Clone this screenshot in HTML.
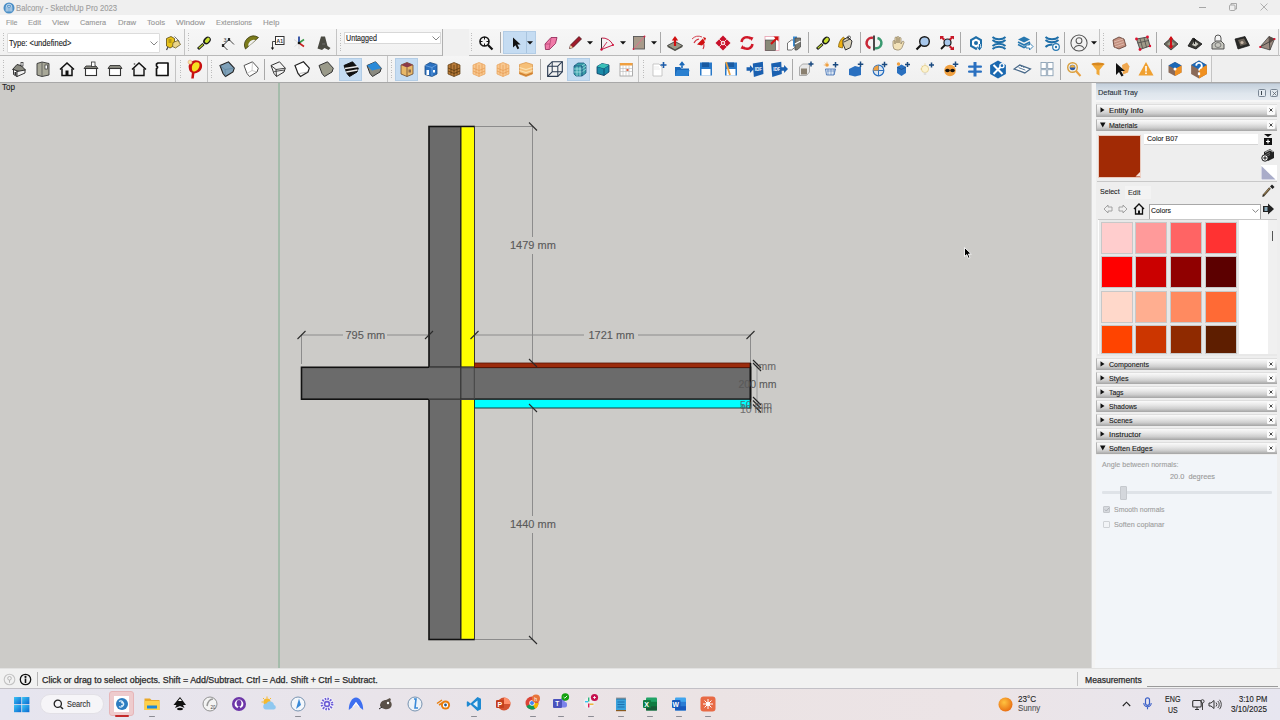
<!DOCTYPE html>
<html><head><meta charset="utf-8"><style>
*{box-sizing:border-box;}
html,body{margin:0;padding:0;}
body{width:1280px;height:720px;position:relative;overflow:hidden;font-family:"Liberation Sans",sans-serif;background:#f0f0f0;}
div{position:absolute;}
.s2{-webkit-text-stroke:0.25px currentColor !important;}
.t{white-space:nowrap;transform-origin:0 0;-webkit-text-stroke:0.12px currentColor;}
svg{position:absolute;overflow:visible;}
</style></head><body>
<div style="left:0;top:0;width:1280px;height:15px;background:#efefef;"></div>
<div style="left:0;top:15px;width:1280px;height:14px;background:#fbfbfb;"></div>
<div class="t" style="left:16px;top:3.5px;font-size:9px;line-height:9px;color:#9d9d9d;transform:scaleX(0.856);">Balcony - SketchUp Pro 2023</div>
<svg style="left:2.5px;top:1.5px" width="12" height="12" viewBox="0 0 12 12"><circle cx="6" cy="6" r="5.5" fill="#4a8ec6"/><path d="M3.2 9.5V5a2.8 2.8 0 0 1 5.6 0v4.5" stroke="#e4eef7" stroke-width="0.8" fill="none"/><path d="M4.8 9.5V5.3a1.2 1.2 0 0 1 2.4 0v4.2" stroke="#e4eef7" stroke-width="0.8" fill="none"/><path d="M6 9.5V6" stroke="#e4eef7" stroke-width="0.6"/></svg>
<div style="left:1199px;top:6.5px;width:7px;height:1px;background:#a6a6a6;"></div>
<svg style="left:1228.5px;top:3px" width="8" height="8" viewBox="0 0 8 8"><rect x="0.5" y="2" width="5.5" height="5.5" fill="none" stroke="#a0a0a0" stroke-width="0.9" rx="1"/><path d="M2 2V0.5h5.5V6H6" fill="none" stroke="#a0a0a0" stroke-width="0.9"/></svg>
<svg style="left:1259.5px;top:3px" width="8" height="8" viewBox="0 0 8 8"><path d="M0.5 0.5L7.5 7.5M7.5 0.5L0.5 7.5" stroke="#a0a0a0" stroke-width="0.8"/></svg>
<div class="t" style="left:5.5px;top:18.5px;font-size:8px;line-height:8px;color:#979797;transform:scaleX(0.892);">File</div>
<div class="t" style="left:28px;top:18.5px;font-size:8px;line-height:8px;color:#979797;transform:scaleX(0.943);">Edit</div>
<div class="t" style="left:52px;top:18.5px;font-size:8px;line-height:8px;color:#979797;transform:scaleX(0.989);">View</div>
<div class="t" style="left:80px;top:18.5px;font-size:8px;line-height:8px;color:#979797;transform:scaleX(0.914);">Camera</div>
<div class="t" style="left:118px;top:18.5px;font-size:8px;line-height:8px;color:#979797;transform:scaleX(0.964);">Draw</div>
<div class="t" style="left:147px;top:18.5px;font-size:8px;line-height:8px;color:#979797;transform:scaleX(0.964);">Tools</div>
<div class="t" style="left:175.6px;top:18.5px;font-size:8px;line-height:8px;color:#979797;transform:scaleX(1.019);">Window</div>
<div class="t" style="left:216px;top:18.5px;font-size:8px;line-height:8px;color:#979797;transform:scaleX(0.92);">Extensions</div>
<div class="t" style="left:262.7px;top:18.5px;font-size:8px;line-height:8px;color:#979797;transform:scaleX(0.991);">Help</div>
<div style="left:0;top:29px;width:1280px;height:53px;background:#eeeeee;"></div>
<div style="left:0;top:82px;width:1091px;height:586px;background:#cccbc8;"></div>
<div style="left:0;top:82px;width:1091px;height:1px;background:#9c9c9c;"></div>
<div style="left:1091px;top:82px;width:189px;height:586px;background:#f0f0f0;"></div>
<svg style="left:0;top:0" width="1091" height="668" viewBox="0 0 1091 668"><rect x="278" y="83" width="2" height="585" fill="#bcd6c4" opacity="0.35"/><line x1="279" y1="83" x2="279" y2="668" stroke="#82a890" stroke-width="1"/><line x1="301" y1="335" x2="343" y2="335" stroke="#8c8c8c" stroke-width="1"/><line x1="387" y1="335" x2="429" y2="335" stroke="#8c8c8c" stroke-width="1"/><line x1="301.5" y1="335" x2="301.5" y2="364" stroke="#8c8c8c" stroke-width="1"/><line x1="474" y1="335" x2="584" y2="335" stroke="#8c8c8c" stroke-width="1"/><line x1="638" y1="335" x2="750" y2="335" stroke="#8c8c8c" stroke-width="1"/><line x1="750.5" y1="335" x2="750.5" y2="363" stroke="#8c8c8c" stroke-width="1"/><line x1="475" y1="126.5" x2="533" y2="126.5" stroke="#8c8c8c" stroke-width="1"/><line x1="532.5" y1="126" x2="532.5" y2="237" stroke="#8c8c8c" stroke-width="1"/><line x1="532.5" y1="254" x2="532.5" y2="363" stroke="#8c8c8c" stroke-width="1"/><line x1="475" y1="639.5" x2="533" y2="639.5" stroke="#8c8c8c" stroke-width="1"/><line x1="532.5" y1="408" x2="532.5" y2="516" stroke="#8c8c8c" stroke-width="1"/><line x1="532.5" y1="533" x2="532.5" y2="640" stroke="#8c8c8c" stroke-width="1"/><line x1="757" y1="363" x2="757" y2="409" stroke="#9a9a9a" stroke-width="1"/><rect x="429" y="126.5" width="45" height="513" fill="#6b6b6b" stroke="#111" stroke-width="1.6"/><rect x="461" y="127.3" width="13" height="240" fill="#ffff00"/><rect x="461" y="399.5" width="13" height="239.2" fill="#ffff00"/><line x1="460.8" y1="127" x2="460.8" y2="639" stroke="#222" stroke-width="1.4"/><rect x="301.5" y="367.3" width="449" height="31.9" fill="#6b6b6b" stroke="#111" stroke-width="1.6"/><line x1="429" y1="367.3" x2="474" y2="367.3" stroke="#555" stroke-width="1"/><line x1="429" y1="399.2" x2="474" y2="399.2" stroke="#555" stroke-width="1"/><line x1="460.8" y1="367" x2="460.8" y2="399.5" stroke="#333" stroke-width="1.2"/><line x1="474.3" y1="367" x2="474.3" y2="399.5" stroke="#444" stroke-width="1"/><rect x="429" y="368.2" width="0" height="30" /><rect x="428" y="368.1" width="32" height="30.3" fill="#6b6b6b"/><rect x="474.5" y="363" width="276" height="4.5" fill="#9b2b0c" stroke="#5a1505" stroke-width="0.8"/><rect x="474.5" y="399.5" width="276" height="8.5" fill="#00ffff" stroke="#1a3a3a" stroke-width="1"/><line x1="750.5" y1="363" x2="750.5" y2="408.5" stroke="#111" stroke-width="1.6"/><line x1="297.5" y1="339" x2="305.5" y2="331" stroke="#2a2a2a" stroke-width="1.1"/><line x1="425" y1="339" x2="433" y2="331" stroke="#2a2a2a" stroke-width="1.1"/><line x1="470.5" y1="339" x2="478.5" y2="331" stroke="#2a2a2a" stroke-width="1.1"/><line x1="746.5" y1="339" x2="754.5" y2="331" stroke="#2a2a2a" stroke-width="1.1"/><line x1="529" y1="122.5" x2="537" y2="130.5" stroke="#2a2a2a" stroke-width="1.1"/><line x1="529" y1="359" x2="537" y2="367" stroke="#2a2a2a" stroke-width="1.1"/><line x1="529" y1="404" x2="537" y2="412" stroke="#2a2a2a" stroke-width="1.1"/><line x1="529" y1="636" x2="537" y2="644" stroke="#2a2a2a" stroke-width="1.1"/><line x1="753" y1="360" x2="761" y2="368" stroke="#222" stroke-width="1.1"/><line x1="753" y1="363" x2="761" y2="371" stroke="#222" stroke-width="1.1"/><line x1="753" y1="397" x2="761" y2="405" stroke="#222" stroke-width="1.1"/><line x1="753" y1="400.5" x2="761" y2="408.5" stroke="#222" stroke-width="1.1"/><line x1="753" y1="404.5" x2="761" y2="412.5" stroke="#222" stroke-width="1.1"/></svg>
<div class="t" style="left:345.5px;top:330px;font-size:11px;line-height:11px;color:#5a5a5a;">795 mm</div>
<div class="t" style="left:588.5px;top:330px;font-size:11px;line-height:11px;color:#5a5a5a;">1721 mm</div>
<div class="t" style="left:510px;top:239.5px;font-size:11px;line-height:11px;color:#5a5a5a;">1479 mm</div>
<div class="t" style="left:510px;top:519px;font-size:11px;line-height:11px;color:#5a5a5a;">1440 mm</div>
<div class="t" style="left:738.5px;top:378.5px;font-size:10.5px;line-height:10.5px;color:#5a5a5a;">200 mm</div>
<div class="t" style="left:758.5px;top:361px;font-size:10.5px;line-height:10.5px;color:#5a5a5a;opacity:0.85;">mm</div>
<div class="t" style="left:740px;top:399.5px;font-size:10.5px;line-height:10.5px;color:#5a5a5a;opacity:0.8;">50 mm</div>
<div class="t" style="left:740px;top:403.5px;font-size:10.5px;line-height:10.5px;color:#5a5a5a;opacity:0.8;">10 mm</div>
<div class="t" style="left:2px;top:83.5px;font-size:8.2px;line-height:8.2px;color:#222;transform:scaleX(0.983);">Top</div>
<svg style="left:962.5px;top:245.5px" width="10" height="14" viewBox="0 0 10 14"><path d="M1.5 1.5V10.5L3.8 8.6L5.3 12.3L6.9 11.6L5.5 8H8.3Z" fill="#000" stroke="#fff" stroke-width="0.9" stroke-linejoin="round"/></svg><div style="left:1091px;top:82px;width:5px;height:586px;background:#f4f4f4;border-left:1px solid #dadada;"></div>
<div style="left:1096px;top:82px;width:184px;height:586px;background:#eeeeee;"></div>
<div style="left:1096px;top:82.5px;width:184px;height:17.5px;background:linear-gradient(#c4d0dc,#dfe6ed 60%,#e6ebf1);border-top:1px solid #b4bcc6;"></div>
<div class="t" style="left:1098.2px;top:88.8px;font-size:8px;line-height:8px;color:#28323c;transform:scaleX(0.923);">Default Tray</div>

<div style="left:1258px;top:89px;width:7.5px;height:7.5px;border:1px solid #7a8694;border-radius:1.5px;background:#e3e9ef;"></div>
<div style="left:1261.2px;top:90.5px;width:1.3px;height:4.5px;background:#3c4650;"></div>
<div style="left:1270px;top:89px;width:7.5px;height:7.5px;border:1px solid #7a8694;border-radius:1.5px;background:#e3e9ef;"></div>
<svg style="left:1271.5px;top:90.5px" width="5" height="5"><path d="M0.5 0.5L4.5 4.5M4.5 0.5L0.5 4.5" stroke="#5a6470" stroke-width="0.8"/></svg>
<div style="left:1096px;top:100px;width:184px;height:2px;background:#f6f6f6;"></div>
<div style="left:1096px;top:104px;width:181px;height:12.5px;background:linear-gradient(#fafafa,#e8e8e8 35%,#cdcdcd 70%,#a4a4a4);border-left:1px solid #b4b4b4;border-top:1px solid #dedede;"></div><svg style="left:1100px;top:107.2px" width="6" height="6"><path d="M0.5 0.3V5.5L4.5 2.9Z" fill="#111"/></svg><div class="t" style="left:1108.8px;top:107.3px;font-size:8px;line-height:8px;color:#202020;transform:scaleX(0.964);">Entity Info</div>
<div style="left:1266.6px;top:106px;width:8px;height:8.5px;background:#fbfbfb;border-radius:1px;"></div><svg style="left:1268.6px;top:108.2px" width="4" height="4"><path d="M0.5 0.5L3.5 3.5M3.5 0.5L0.5 3.5" stroke="#333" stroke-width="0.9"/></svg>
<div style="left:1096px;top:118.5px;width:181px;height:12.5px;background:linear-gradient(#fafafa,#e8e8e8 35%,#cdcdcd 70%,#a4a4a4);border-left:1px solid #b4b4b4;border-top:1px solid #dedede;"></div><svg style="left:1099.5px;top:122.0px" width="6" height="6"><path d="M0 0.5H5.5L2.75 5.5Z" fill="#111"/></svg><div class="t" style="left:1108.8px;top:121.8px;font-size:8px;line-height:8px;color:#202020;transform:scaleX(0.881);">Materials</div>
<div style="left:1266.6px;top:120.5px;width:8px;height:8.5px;background:#fbfbfb;border-radius:1px;"></div><svg style="left:1268.6px;top:122.7px" width="4" height="4"><path d="M0.5 0.5L3.5 3.5M3.5 0.5L0.5 3.5" stroke="#333" stroke-width="0.9"/></svg>
<div style="left:1097.9px;top:134.5px;width:43.3px;height:43px;background:#a12a05;border:1px solid #e8c9bd;"></div>
<svg style="left:1135px;top:171px" width="6" height="6"><path d="M5.5 0.5V5.5H0.5Z" fill="#f3e0d8"/></svg>
<div style="left:1144px;top:133.6px;width:114px;height:11.8px;background:#ffffff;border-bottom:1px solid #d5d5d5;"></div>
<div class="t" style="left:1147px;top:135.1px;font-size:8px;line-height:8px;color:#222;transform:scaleX(0.871);">Color B07</div>

<div style="left:1097px;top:181px;width:180px;height:1px;background:#c8c8c8;"></div>
<svg style="left:1262px;top:133px" width="12" height="13" viewBox="0 0 12 13"><path d="M2 1h8l-4 3z" fill="#111"/><rect x="2" y="5" width="8" height="7" fill="#111"/><path d="M6 6.5v4M4 8.5h4" stroke="#fff" stroke-width="1.2"/></svg>
<svg style="left:1261px;top:148px" width="14" height="14" viewBox="0 0 14 14"><path d="M3 4l6-3 4 3v6l-6 3-4-3z" fill="#222"/><path d="M4 4.5l5-2.5 3 2" stroke="#ddd" stroke-width="0.8" fill="none"/><path d="M4 7l5-2.5M4 9l5-2.5" stroke="#999" stroke-width="0.7"/><circle cx="4" cy="10" r="3.2" fill="#fff" stroke="#111" stroke-width="1"/><path d="M4 8.2v3.6M2.2 10h3.6" stroke="#111" stroke-width="1"/></svg>
<div style="left:1260.5px;top:164.5px;width:16px;height:15px;background:#ffffff;"></div>
<svg style="left:1261px;top:165px" width="15" height="15"><path d="M0.5 1V14.5H14.5Z" fill="#a9acc9"/></svg>
<div style="left:1125px;top:186px;width:25.6px;height:13px;background:#f3f3f3;"></div>
<div class="t" style="left:1100px;top:188.2px;font-size:8px;line-height:8px;color:#1e1e1e;transform:scaleX(0.882);">Select</div>

<div class="t" style="left:1128px;top:188.9px;font-size:8px;line-height:8px;color:#333;transform:scaleX(0.907);">Edit</div>

<svg style="left:1261px;top:184px" width="14" height="13" viewBox="0 0 14 13"><path d="M2 12L9 4" stroke="#4a4030" stroke-width="2.2"/><path d="M1.5 12.5l1.5-1" stroke="#222" stroke-width="1"/><path d="M9 2.5l2-2 2.5 2.5-2 2z" fill="#222"/><path d="M3 10.5l5.5-6" stroke="#c4a060" stroke-width="0.8"/></svg>
<svg style="left:1103px;top:204px" width="10" height="10" viewBox="0 0 10 10"><path d="M1 5L5 1V3H9V7H5V9Z" fill="none" stroke="#9a9a9a" stroke-width="0.9"/></svg>
<svg style="left:1118px;top:204px" width="10" height="10" viewBox="0 0 10 10"><path d="M9 5L5 1V3H1V7H5V9Z" fill="none" stroke="#9a9a9a" stroke-width="0.9"/></svg>
<svg style="left:1133px;top:202.5px" width="12" height="12" viewBox="0 0 12 12"><path d="M1 6L6 1L11 6" fill="none" stroke="#111" stroke-width="1.4"/><path d="M2.5 5V11H9.5V5" fill="none" stroke="#111" stroke-width="1.3"/><rect x="5" y="7.5" width="2" height="3.5" fill="#111"/></svg>
<div style="left:1148.5px;top:203.7px;width:112px;height:15.2px;background:#fff;border:1px solid #a8a8a8;border-bottom:none;"></div>
<div class="t" style="left:1151px;top:207px;font-size:8px;line-height:8px;color:#222;transform:scaleX(0.865);">Colors</div>

<svg style="left:1251.5px;top:209px" width="7" height="4"><path d="M0.5 0.5L3.5 3.3L6.5 0.5" fill="none" stroke="#666" stroke-width="0.8"/></svg>
<svg style="left:1262px;top:203px" width="13" height="12" viewBox="0 0 13 12"><path d="M1 3H6V0.5L12 6L6 11.5V9H1Z" fill="#222"/><rect x="2.5" y="4" width="3" height="4" fill="#8ab"/></svg>
<div style="left:1097.5px;top:219.4px;width:179px;height:135px;background:#ffffff;border-top:1px solid #c9c9c9;"></div>
<div style="left:1268px;top:220px;width:8.5px;height:134px;background:#f0f0f0;"></div>
<div style="left:1272px;top:231px;width:1px;height:10px;background:#555;"></div>
<div style="left:1099px;top:220px;width:140px;height:134px;background:#e8e8e8;"></div>
<div style="left:1100.5px;top:221.5px;width:32px;height:32px;background:#ffcdcd;border:0.5px solid #c8c8c8;"></div>
<div style="left:1135.3px;top:221.5px;width:32px;height:32px;background:#ff9a9a;border:0.5px solid #c8c8c8;"></div>
<div style="left:1170.3px;top:221.5px;width:32px;height:32px;background:#ff6464;border:0.5px solid #c8c8c8;"></div>
<div style="left:1204.8px;top:221.5px;width:32px;height:32px;background:#ff3232;border:0.5px solid #c8c8c8;"></div>
<div style="left:1100.5px;top:255.8px;width:32px;height:32px;background:#ff0000;border:0.5px solid #c8c8c8;"></div>
<div style="left:1135.3px;top:255.8px;width:32px;height:32px;background:#cb0000;border:0.5px solid #c8c8c8;"></div>
<div style="left:1170.3px;top:255.8px;width:32px;height:32px;background:#900000;border:0.5px solid #c8c8c8;"></div>
<div style="left:1204.8px;top:255.8px;width:32px;height:32px;background:#5c0000;border:0.5px solid #c8c8c8;"></div>
<div style="left:1100.5px;top:290.5px;width:32px;height:32px;background:#ffd8ca;border:0.5px solid #c8c8c8;"></div>
<div style="left:1135.3px;top:290.5px;width:32px;height:32px;background:#ffae90;border:0.5px solid #c8c8c8;"></div>
<div style="left:1170.3px;top:290.5px;width:32px;height:32px;background:#ff8a60;border:0.5px solid #c8c8c8;"></div>
<div style="left:1204.8px;top:290.5px;width:32px;height:32px;background:#ff6a35;border:0.5px solid #c8c8c8;"></div>
<div style="left:1100.5px;top:325.2px;width:32px;height:28.5px;background:#ff4400;border:0.5px solid #c8c8c8;"></div>
<div style="left:1135.3px;top:325.2px;width:32px;height:28.5px;background:#cc3600;border:0.5px solid #c8c8c8;"></div>
<div style="left:1170.3px;top:325.2px;width:32px;height:28.5px;background:#8f2a00;border:0.5px solid #c8c8c8;"></div>
<div style="left:1204.8px;top:325.2px;width:32px;height:28.5px;background:#5e1e00;border:0.5px solid #c8c8c8;"></div>
<div style="left:1097px;top:354px;width:180px;height:2px;background:#e8e8e8;"></div>
<div style="left:1096px;top:357.8px;width:181px;height:12.5px;background:linear-gradient(#fafafa,#e8e8e8 35%,#cdcdcd 70%,#a4a4a4);border-left:1px solid #b4b4b4;border-top:1px solid #dedede;"></div><svg style="left:1100px;top:361.0px" width="6" height="6"><path d="M0.5 0.3V5.5L4.5 2.9Z" fill="#111"/></svg><div class="t" style="left:1108.8px;top:361.1px;font-size:8px;line-height:8px;color:#202020;transform:scaleX(0.882);">Components</div>
<div style="left:1266.6px;top:359.8px;width:8px;height:8.5px;background:#fbfbfb;border-radius:1px;"></div><svg style="left:1268.6px;top:362.0px" width="4" height="4"><path d="M0.5 0.5L3.5 3.5M3.5 0.5L0.5 3.5" stroke="#333" stroke-width="0.9"/></svg>
<div style="left:1096px;top:371.82px;width:181px;height:12.5px;background:linear-gradient(#fafafa,#e8e8e8 35%,#cdcdcd 70%,#a4a4a4);border-left:1px solid #b4b4b4;border-top:1px solid #dedede;"></div><svg style="left:1100px;top:375.02px" width="6" height="6"><path d="M0.5 0.3V5.5L4.5 2.9Z" fill="#111"/></svg><div class="t" style="left:1108.8px;top:375.12px;font-size:8px;line-height:8px;color:#202020;transform:scaleX(0.895);">Styles</div>
<div style="left:1266.6px;top:373.82px;width:8px;height:8.5px;background:#fbfbfb;border-radius:1px;"></div><svg style="left:1268.6px;top:376.02px" width="4" height="4"><path d="M0.5 0.5L3.5 3.5M3.5 0.5L0.5 3.5" stroke="#333" stroke-width="0.9"/></svg>
<div style="left:1096px;top:385.84000000000003px;width:181px;height:12.5px;background:linear-gradient(#fafafa,#e8e8e8 35%,#cdcdcd 70%,#a4a4a4);border-left:1px solid #b4b4b4;border-top:1px solid #dedede;"></div><svg style="left:1100px;top:389.04px" width="6" height="6"><path d="M0.5 0.3V5.5L4.5 2.9Z" fill="#111"/></svg><div class="t" style="left:1108.8px;top:389.14000000000004px;font-size:8px;line-height:8px;color:#202020;transform:scaleX(0.858);">Tags</div>
<div style="left:1266.6px;top:387.84000000000003px;width:8px;height:8.5px;background:#fbfbfb;border-radius:1px;"></div><svg style="left:1268.6px;top:390.04px" width="4" height="4"><path d="M0.5 0.5L3.5 3.5M3.5 0.5L0.5 3.5" stroke="#333" stroke-width="0.9"/></svg>
<div style="left:1096px;top:399.86px;width:181px;height:12.5px;background:linear-gradient(#fafafa,#e8e8e8 35%,#cdcdcd 70%,#a4a4a4);border-left:1px solid #b4b4b4;border-top:1px solid #dedede;"></div><svg style="left:1100px;top:403.06px" width="6" height="6"><path d="M0.5 0.3V5.5L4.5 2.9Z" fill="#111"/></svg><div class="t" style="left:1108.8px;top:403.16px;font-size:8px;line-height:8px;color:#202020;transform:scaleX(0.851);">Shadows</div>
<div style="left:1266.6px;top:401.86px;width:8px;height:8.5px;background:#fbfbfb;border-radius:1px;"></div><svg style="left:1268.6px;top:404.06px" width="4" height="4"><path d="M0.5 0.5L3.5 3.5M3.5 0.5L0.5 3.5" stroke="#333" stroke-width="0.9"/></svg>
<div style="left:1096px;top:413.88px;width:181px;height:12.5px;background:linear-gradient(#fafafa,#e8e8e8 35%,#cdcdcd 70%,#a4a4a4);border-left:1px solid #b4b4b4;border-top:1px solid #dedede;"></div><svg style="left:1100px;top:417.08px" width="6" height="6"><path d="M0.5 0.3V5.5L4.5 2.9Z" fill="#111"/></svg><div class="t" style="left:1108.8px;top:417.18px;font-size:8px;line-height:8px;color:#202020;transform:scaleX(0.881);">Scenes</div>
<div style="left:1266.6px;top:415.88px;width:8px;height:8.5px;background:#fbfbfb;border-radius:1px;"></div><svg style="left:1268.6px;top:418.08px" width="4" height="4"><path d="M0.5 0.5L3.5 3.5M3.5 0.5L0.5 3.5" stroke="#333" stroke-width="0.9"/></svg>
<div style="left:1096px;top:427.9px;width:181px;height:12.5px;background:linear-gradient(#fafafa,#e8e8e8 35%,#cdcdcd 70%,#a4a4a4);border-left:1px solid #b4b4b4;border-top:1px solid #dedede;"></div><svg style="left:1100px;top:431.09999999999997px" width="6" height="6"><path d="M0.5 0.3V5.5L4.5 2.9Z" fill="#111"/></svg><div class="t" style="left:1108.8px;top:431.2px;font-size:8px;line-height:8px;color:#202020;transform:scaleX(0.96);">Instructor</div>
<div style="left:1266.6px;top:429.9px;width:8px;height:8.5px;background:#fbfbfb;border-radius:1px;"></div><svg style="left:1268.6px;top:432.09999999999997px" width="4" height="4"><path d="M0.5 0.5L3.5 3.5M3.5 0.5L0.5 3.5" stroke="#333" stroke-width="0.9"/></svg>
<div style="left:1096px;top:441.92px;width:181px;height:12.5px;background:linear-gradient(#fafafa,#e8e8e8 35%,#cdcdcd 70%,#a4a4a4);border-left:1px solid #b4b4b4;border-top:1px solid #dedede;"></div><svg style="left:1099.5px;top:445.42px" width="6" height="6"><path d="M0 0.5H5.5L2.75 5.5Z" fill="#111"/></svg><div class="t" style="left:1108.8px;top:445.22px;font-size:8px;line-height:8px;color:#202020;transform:scaleX(0.906);">Soften Edges</div>
<div style="left:1266.6px;top:443.92px;width:8px;height:8.5px;background:#fbfbfb;border-radius:1px;"></div><svg style="left:1268.6px;top:446.12px" width="4" height="4"><path d="M0.5 0.5L3.5 3.5M3.5 0.5L0.5 3.5" stroke="#333" stroke-width="0.9"/></svg>
<div style="left:1096px;top:454.5px;width:181px;height:213.5px;background:#f2f5f9;"></div>
<div class="t" style="left:1102px;top:460.6px;font-size:8px;line-height:8px;color:#a0a0a0;transform:scaleX(0.891);">Angle between normals:</div>

<div class="t" style="left:1170px;top:473.3px;font-size:8px;line-height:8px;color:#9a9a9a;transform:scaleX(0.92);">20.0&nbsp; degrees</div>

<div style="left:1102px;top:491px;width:170px;height:2.5px;background:#dfe3e8;border-radius:1px;"></div>
<div style="left:1119.5px;top:485.5px;width:7px;height:14px;background:#d4d7dc;border:1px solid #c6c9ce;border-radius:1px;"></div>
<div style="left:1102.5px;top:505.5px;width:7px;height:7px;background:#d6d9de;border:1px solid #c4c7cc;border-radius:1px;"></div>
<svg style="left:1103.5px;top:506.5px" width="6" height="5"><path d="M0.8 2.5L2.3 4L5.2 0.8" fill="none" stroke="#a8acb2" stroke-width="0.9"/></svg>
<div class="t" style="left:1113.8px;top:505.6px;font-size:8px;line-height:8px;color:#a0a0a0;transform:scaleX(0.867);">Smooth normals</div>

<div style="left:1102.5px;top:521px;width:7px;height:7px;background:#f2f4f7;border:1px solid #cfd2d6;border-radius:1px;"></div>
<div class="t" style="left:1113.8px;top:520.5px;font-size:8px;line-height:8px;color:#a0a0a0;transform:scaleX(0.901);">Soften coplanar</div>

<div style="left:0;top:668px;width:1280px;height:20px;background:#f1f1f1;border-top:1px solid #e2e2e2;"></div>
<div style="left:1095px;top:660px;width:181px;height:7.5px;background:#f4f6f9;"></div>
<svg style="left:3px;top:672.5px" width="13" height="13" viewBox="0 0 13 13"><circle cx="6.5" cy="6.5" r="5.3" fill="none" stroke="#c4c4c4" stroke-width="1.1"/><circle cx="6.5" cy="5.3" r="1.8" fill="none" stroke="#b0b0b0" stroke-width="0.9"/><path d="M6.5 7.2V9.8" stroke="#b0b0b0" stroke-width="0.9"/></svg>
<svg style="left:19px;top:672.5px" width="13" height="13" viewBox="0 0 13 13"><circle cx="6.5" cy="6.5" r="5.2" fill="none" stroke="#111" stroke-width="1.3"/><circle cx="6.5" cy="3.9" r="1.1" fill="#111"/><path d="M6.5 5.5V10" stroke="#111" stroke-width="1.6"/></svg>
<div style="left:37.3px;top:671.5px;width:1px;height:14px;background:#b4b4b4;"></div>
<div class="t" style="left:42.1px;top:675.5px;font-size:8.6px;line-height:8.6px;color:#2a2a2a;transform:scaleX(1.032);-webkit-text-stroke:0.25px currentColor;">Click or drag to select objects. Shift = Add/Subtract. Ctrl = Add. Shift + Ctrl = Subtract.</div>

<div style="left:1077px;top:672px;width:1px;height:14px;background:#c4c4c4;"></div>
<div class="t" style="left:1085px;top:675.5px;font-size:8.6px;line-height:8.6px;color:#2a2a2a;transform:scaleX(0.997);-webkit-text-stroke:0.25px currentColor;">Measurements</div>

<div style="left:1147px;top:685.6px;width:131px;height:1px;background:#9a9a9a;"></div>
<div style="left:0;top:688px;width:1280px;height:1px;background:#c2c0c6;z-index:1;"></div>
<div style="left:0;top:688px;width:1280px;height:32px;background:linear-gradient(90deg,#e6e5ef 0%,#e9e4ea 30%,#ebe3e4 55%,#ece4e6 75%,#e7e6f0 100%);"></div>
<svg style="left:14px;top:696.7px" width="15.5" height="15.2" viewBox="0 0 15.5 15.2"><defs><linearGradient id="wg" x1="0" y1="0" x2="1" y2="1"><stop offset="0" stop-color="#3cc4f4"/><stop offset="1" stop-color="#0a68d0"/></linearGradient></defs><rect x="0" y="0" width="7.3" height="7.2" fill="url(#wg)"/><rect x="8.1" y="0" width="7.3" height="7.2" fill="url(#wg)"/><rect x="0" y="8" width="7.3" height="7.2" fill="url(#wg)"/><rect x="8.1" y="8" width="7.3" height="7.2" fill="url(#wg)"/></svg>
<div style="left:40px;top:694px;width:64px;height:19.7px;background:#f6f5f8;border-radius:10px;border:1px solid #e2e0e6;"></div>
<svg style="left:53px;top:698.5px" width="11" height="11" viewBox="0 0 11 11"><circle cx="4.8" cy="4.8" r="3.6" fill="none" stroke="#222" stroke-width="1.3"/><path d="M7.4 7.4L10 10" stroke="#222" stroke-width="1.4"/></svg>
<div class="t" style="left:67px;top:699.8px;font-size:8.6px;line-height:8.6px;color:#333;transform:scaleX(0.855);">Search</div>

<div style="left:109.4px;top:691.3px;width:24.6px;height:25px;background:#eecbcd;border:1px solid #e6b5b8;border-radius:3px;"></div>
<div style="left:114.3px;top:696px;width:14.8px;height:16px;background:#fff;"></div>
<svg style="left:114.5px;top:697px" width="14" height="14" viewBox="0 0 14 14"><circle cx="7" cy="7" r="6" fill="#2d7cc0"/><path d="M4 4.5a3 3 0 1 1 0 5M6 6a1.5 1.5 0 1 1 0 2.5" stroke="#dff0fb" stroke-width="1.1" fill="none"/></svg>
<div style="left:115px;top:714.8px;width:14px;height:1.8px;background:#c42a2a;border-radius:1px;"></div>
<svg style="left:143.5px;top:695.5px" width="16" height="16" viewBox="0 0 16 16"><path d="M0.5 2.5h5.5l1.5 1.5H15.5V14H0.5z" fill="#e9a82a"/><rect x="0.5" y="5" width="15" height="9" fill="#ffd04a"/><rect x="3" y="9.5" width="10" height="3" fill="#1e88d8"/></svg>
<div style="left:148.5px;top:715.5px;width:6px;height:1.5px;background:#8c8c94;border-radius:1px;"></div>
<svg style="left:172.0px;top:696px" width="16" height="16" viewBox="0 0 16 16"><path d="M8 1L1.5 9h3l-1.5 3 5-2 4.5 2-1.5-3h3z" fill="#111"/><path d="M6 5l2-2.5 2 2.5z" fill="#fff"/><ellipse cx="8" cy="13" rx="3" ry="1.3" fill="#111"/></svg>
<svg style="left:202.0px;top:696px" width="16" height="16" viewBox="0 0 16 16"><circle cx="8" cy="8" r="7" fill="#f3f3f3" stroke="#888" stroke-width="0.9"/><path d="M5 10c1-5 3-7 6-7" stroke="#999" stroke-width="1.5" fill="none"/><text x="8.5" y="12.5" font-size="4.5" fill="#444" font-family="Liberation Sans">20</text></svg>
<svg style="left:231.0px;top:696px" width="16" height="16" viewBox="0 0 16 16"><circle cx="8" cy="8" r="7" fill="#6d36a8"/><circle cx="8" cy="8" r="4.4" fill="#fff"/><path d="M5.6 6.5a2.4 2.4 0 0 1 4.8 0v1.5a2.4 2.4 0 0 1-4.8 0z" fill="#6d36a8"/><path d="M6.8 10.5v2.5h2.4v-2.5" fill="#6d36a8"/></svg>
<svg style="left:260.7px;top:696px" width="16" height="16" viewBox="0 0 16 16"><circle cx="6" cy="6" r="3.5" fill="#f5b82e"/><path d="M6 0.5v2M0.5 6h2M2 2l1.4 1.4M10 2L8.6 3.4" stroke="#f5b82e" stroke-width="1"/><path d="M5 13.5a3 3 0 0 1 0.5-6 4 4 0 0 1 7.5 1.5 2.3 2.3 0 0 1 0 4.5z" fill="#8fc8f0"/></svg>
<svg style="left:289.5px;top:696px" width="16" height="16" viewBox="0 0 16 16"><circle cx="8" cy="8" r="7" fill="#f4f7fb" stroke="#6a88a8" stroke-width="0.9"/><path d="M9 2.5L6 13l5-4z" fill="#3a8ad8"/></svg>
<div style="left:294.5px;top:715.5px;width:6px;height:1.5px;background:#8c8c94;border-radius:1px;"></div>
<svg style="left:318.6px;top:696px" width="16" height="16" viewBox="0 0 16 16"><circle cx="8" cy="8" r="7.2" fill="#f4f2fa"/><circle cx="8" cy="8" r="5.2" fill="none" stroke="#6b5cd6" stroke-width="2.4" stroke-dasharray="1.5 1.2"/><circle cx="8" cy="8" r="3.2" fill="#6b5cd6"/><circle cx="8" cy="8" r="1.6" fill="#f4f2fa"/></svg>
<svg style="left:348.0px;top:696px" width="16" height="16" viewBox="0 0 16 16"><path d="M0.8 14C0.8 7 4 1.5 8 1.5S15.2 7 15.2 14L12 11.5 8 6 4 11.5z" fill="#3e6ff0"/><path d="M4 11.5L8 6l4 5.5-1.2-.5L8 8 5.2 11z" fill="#fff"/></svg>
<svg style="left:377.5px;top:696px" width="16" height="16" viewBox="0 0 16 16"><path d="M2 10c0-4 3-6 6-6l4-2 1 2-1 1c1.5 1 2 3 1.5 5-1 2.5-3.5 3.5-6 3.2-2.4-.3-4-1.4-5.5-3.2z" fill="#5a5048"/><circle cx="10" cy="7" r="1.2" fill="#fff"/><path d="M1 13l3-2" stroke="#222" stroke-width="1"/></svg>
<svg style="left:407.0px;top:696px" width="16" height="16" viewBox="0 0 16 16"><circle cx="8" cy="8" r="7" fill="#eef3f8" stroke="#6a88a8" stroke-width="0.9"/><path d="M7 3l2 0-1 9 3 0" stroke="#3a8ad8" stroke-width="1.6" fill="none"/></svg>
<svg style="left:436.0px;top:696px" width="16" height="16" viewBox="0 0 16 16"><circle cx="9.5" cy="9" r="4.6" fill="#e87d0d"/><circle cx="9.5" cy="9" r="2.6" fill="#fff"/><circle cx="9.5" cy="9" r="1.4" fill="#265787"/><path d="M1 7.5l5-3.5M3 9l4-2.5" stroke="#e87d0d" stroke-width="1.5"/></svg>
<svg style="left:465.7px;top:696px" width="16" height="16" viewBox="0 0 16 16"><path d="M11.5 1L15 2.8v10.4L11.5 15 4.5 8.6 1.8 10.8 0.8 10.2V5.8l1-0.6 2.7 2.2z" fill="#1f8ad2"/><path d="M11.5 4.5L7 8l4.5 3.5z" fill="#e8f3fb"/></svg>
<div style="left:470.7px;top:715.5px;width:6px;height:1.5px;background:#8c8c94;border-radius:1px;"></div>
<svg style="left:495.4px;top:696px" width="16" height="16" viewBox="0 0 16 16"><circle cx="9" cy="8" r="6.5" fill="#d35230"/><path d="M9 1.5a6.5 6.5 0 0 1 6.5 6.5H9z" fill="#ff8f6b"/><rect x="1" y="4" width="8" height="8" rx="1" fill="#c43e1c"/><text x="2.6" y="10.8" font-size="7" font-weight="bold" fill="#fff" font-family="Liberation Sans">P</text></svg>
<svg style="left:523.5px;top:694px" width="18" height="18" viewBox="0 0 18 18"><circle cx="8" cy="9" r="6.5" fill="#db4437"/><path d="M8 9L2.4 12.3A6.5 6.5 0 0 0 11.2 14.7z" fill="#0f9d58"/><path d="M8 9l3.2 5.7A6.5 6.5 0 0 0 14.5 9z" fill="#f4b400"/><circle cx="8" cy="9" r="2.7" fill="#fff"/><circle cx="8" cy="9" r="2" fill="#4285f4"/><circle cx="12" cy="4.5" r="4" fill="#e8743b"/><text x="10.3" y="7" font-size="5" fill="#fff" font-family="Liberation Sans">h</text></svg>
<div style="left:529.5px;top:715.5px;width:6px;height:1.5px;background:#8c8c94;border-radius:1px;"></div>
<svg style="left:552.0px;top:693px" width="18" height="18" viewBox="0 0 18 18"><circle cx="11" cy="7" r="2.3" fill="#7b83eb"/><rect x="8" y="9" width="7" height="5.5" rx="2" fill="#7b83eb"/><rect x="1" y="6" width="9" height="9" rx="1" fill="#4b53bc"/><text x="3.2" y="13.3" font-size="6.5" font-weight="bold" fill="#fff" font-family="Liberation Sans">T</text><circle cx="13.3" cy="4" r="3.8" fill="#13a10e"/><path d="M11.6 4l1.2 1.2 2.3-2.3" stroke="#fff" stroke-width="0.9" fill="none"/></svg>
<div style="left:558px;top:715.5px;width:6px;height:1.5px;background:#8c8c94;border-radius:1px;"></div>
<svg style="left:582.0px;top:693px" width="18" height="18" viewBox="0 0 18 18"><circle cx="7" cy="10" r="5.5" fill="#f0eef2"/><rect x="3" y="8" width="3.2" height="1.4" fill="#36c5f0"/><rect x="6" y="4.5" width="1.4" height="4" fill="#2eb67d"/><rect x="7.5" y="10.5" width="4" height="1.4" fill="#ecb22e"/><rect x="6" y="10.5" width="1.4" height="4" fill="#e01e5a"/><circle cx="12.5" cy="4.5" r="3.6" fill="#c5114f"/><path d="M12.5 3v3M11 4.5h3" stroke="#fff" stroke-width="0.8"/></svg>
<div style="left:588px;top:715.5px;width:6px;height:1.5px;background:#8c8c94;border-radius:1px;"></div>
<svg style="left:612.6px;top:696px" width="16" height="16" viewBox="0 0 16 16"><rect x="3" y="2.5" width="10" height="12" rx="1" fill="#3aa2dc"/><path d="M4.5 6h7M4.5 8.5h7M4.5 11h7" stroke="#1a6aa8" stroke-width="0.9"/><path d="M4 1.5v2M6 1.5v2M8 1.5v2M10 1.5v2M12 1.5v2" stroke="#222" stroke-width="0.7"/><rect x="3" y="14" width="10" height="1.2" fill="#8a5a20"/></svg>
<div style="left:617.6px;top:715.5px;width:6px;height:1.5px;background:#8c8c94;border-radius:1px;"></div>
<svg style="left:642.0px;top:696px" width="16" height="16" viewBox="0 0 16 16"><rect x="4" y="1.5" width="11" height="13" rx="1" fill="#21a366"/><rect x="4" y="5.8" width="11" height="4.3" fill="#107c41"/><rect x="4" y="10.1" width="11" height="4.4" fill="#185c37"/><rect x="1" y="4" width="8" height="8" rx="1" fill="#107c41"/><text x="2.3" y="10.8" font-size="7" font-weight="bold" fill="#fff" font-family="Liberation Sans">X</text></svg>
<div style="left:647px;top:715.5px;width:6px;height:1.5px;background:#8c8c94;border-radius:1px;"></div>
<svg style="left:671.0px;top:696px" width="16" height="16" viewBox="0 0 16 16"><rect x="4" y="1.5" width="11" height="13" rx="1" fill="#41a5ee"/><rect x="4" y="5.8" width="11" height="4.3" fill="#2b7cd3"/><rect x="4" y="10.1" width="11" height="4.4" fill="#185abd"/><rect x="1" y="4" width="8.5" height="8" rx="1" fill="#185abd"/><text x="1.6" y="10.8" font-size="6.8" font-weight="bold" fill="#fff" font-family="Liberation Sans">W</text></svg>
<div style="left:676px;top:715.5px;width:6px;height:1.5px;background:#8c8c94;border-radius:1px;"></div>
<svg style="left:700.0px;top:696px" width="16" height="16" viewBox="0 0 16 16"><rect x="0.5" y="0.5" width="15" height="15" rx="3" fill="#e86a45"/><path d="M8 3v10M3 8h10M4.5 4.5l7 7M11.5 4.5l-7 7" stroke="#fff" stroke-width="1"/><circle cx="8" cy="8" r="2" fill="#fff"/></svg>
<div style="left:705px;top:715.5px;width:6px;height:1.5px;background:#8c8c94;border-radius:1px;"></div>
<svg style="left:997.5px;top:696.5px" width="15" height="15"><defs><radialGradient id="sg" cx="0.4" cy="0.35" r="0.7"><stop offset="0" stop-color="#ffc340"/><stop offset="1" stop-color="#e86a10"/></radialGradient></defs><circle cx="7.5" cy="7.5" r="7" fill="url(#sg)"/></svg>
<div class="t" style="left:1018.3px;top:695.3px;font-size:8.6px;line-height:8.6px;color:#222;transform:scaleX(0.947);">23°C</div>

<div class="t" style="left:1018.3px;top:704.3px;font-size:8.6px;line-height:8.6px;color:#555;transform:scaleX(0.914);">Sunny</div>

<svg style="left:1122px;top:701px" width="9" height="6"><path d="M0.8 5L4.5 1.2L8.2 5" fill="none" stroke="#222" stroke-width="1.1"/></svg>
<svg style="left:1143px;top:697px" width="9" height="13" viewBox="0 0 9 13"><rect x="2.5" y="0.8" width="4" height="7.5" rx="2" fill="none" stroke="#3a5fc8" stroke-width="1.2"/><path d="M0.8 6a3.7 3.7 0 0 0 7.4 0M4.5 10v2.2" stroke="#3a5fc8" stroke-width="1.1" fill="none"/></svg>
<div class="t" style="left:1164.8px;top:694.7px;font-size:8.6px;line-height:8.6px;color:#222;transform:scaleX(0.832);">ENG</div>

<div class="t" style="left:1168px;top:705.7px;font-size:8.6px;line-height:8.6px;color:#222;transform:scaleX(0.812);">US</div>

<svg style="left:1192px;top:698.5px" width="13" height="12" viewBox="0 0 13 12"><rect x="0.7" y="1.5" width="8.5" height="6.5" rx="1" fill="none" stroke="#333" stroke-width="1.1"/><path d="M3 10.5h4M5 8v2.5" stroke="#333" stroke-width="1"/><circle cx="10.5" cy="2.3" r="1.6" fill="none" stroke="#333" stroke-width="0.9"/><path d="M10.5 4v7" stroke="#333" stroke-width="0.9"/></svg>
<svg style="left:1208px;top:699px" width="13" height="11" viewBox="0 0 13 11"><path d="M1 4h2l3-2.5v8L3 7H1z" fill="none" stroke="#333" stroke-width="1"/><path d="M8 3.5a3 3 0 0 1 0 4M9.8 2a5 5 0 0 1 0 7M11.5 0.8a7 7 0 0 1 0 9.4" fill="none" stroke="#333" stroke-width="0.9"/></svg>
<div class="t" style="left:1238.7px;top:694.5px;font-size:8.6px;line-height:8.6px;color:#222;transform:scaleX(0.884);">3:10 PM</div>

<div class="t" style="left:1231px;top:704.7px;font-size:8.6px;line-height:8.6px;color:#222;transform:scaleX(0.941);">3/10/2025</div>

<div style="left:0;top:29px;width:1280px;height:26.5px;background:linear-gradient(#f6f6f6,#f1f1f1);border-bottom:1px solid #b9b9b9;"></div>
<div style="left:443px;top:29px;width:26px;height:27px;background:#f0f0f0;"></div>
<div style="left:0;top:56px;width:1211.5px;height:26px;background:linear-gradient(#f5f5f5,#f0f0f0);"></div>
<div style="left:1211.5px;top:56px;width:68.5px;height:26px;background:#efefef;"></div>
<div style="left:0;top:81.5px;width:1280px;height:1px;background:#a8a8a8;"></div>
<div style="left:2.5px;top:33px;width:1px;height:20px;background:repeating-linear-gradient(#bdbdbd 0 1px,transparent 1px 2.5px);"></div>
<div style="left:7px;top:32.5px;width:152.5px;height:20.5px;background:#fff;border:1px solid #dcdcdc;border-radius:1px;"></div>
<div class="t" style="left:9.3px;top:38.5px;font-size:8.6px;line-height:8.6px;color:#222;transform:scaleX(0.877);">Type: &lt;undefined&gt;</div>

<svg style="left:149.5px;top:40.5px" width="8" height="5"><path d="M0.5 0.5L4 4L7.5 0.5" fill="none" stroke="#777" stroke-width="0.9"/></svg>
<div style="left:184.3px;top:29px;width:1px;height:26px;background:#c4c4c4;"></div>
<div style="left:188.2px;top:33px;width:1px;height:20px;background:repeating-linear-gradient(#bdbdbd 0 1px,transparent 1px 2.5px);"></div>
<div style="left:336.4px;top:29px;width:1px;height:26px;background:#c4c4c4;"></div>
<div style="left:340.0px;top:33px;width:1px;height:20px;background:repeating-linear-gradient(#bdbdbd 0 1px,transparent 1px 2.5px);"></div>
<div style="left:344px;top:31.6px;width:96.5px;height:12.2px;background:#fff;border:1px solid #d8d8d8;"></div>
<div class="t" style="left:346px;top:33.5px;font-size:8.6px;line-height:8.6px;color:#222;transform:scaleX(0.831);">Untagged</div>

<svg style="left:431.5px;top:36px" width="8" height="5"><path d="M0.5 0.5L4 4L7.5 0.5" fill="none" stroke="#777" stroke-width="0.9"/></svg>
<div style="left:442px;top:29px;width:1px;height:26.5px;background:#b0b0b0;"></div>
<div style="left:470.9px;top:33px;width:1px;height:20px;background:repeating-linear-gradient(#bdbdbd 0 1px,transparent 1px 2.5px);"></div>
<div style="left:500.0px;top:32px;width:1px;height:21px;background:#a9a9a9;"></div>
<div style="left:502.7px;top:31px;width:32.900000000000034px;height:22.5px;background:#c5dcf2;border:1px solid #b3cde6;"></div>
<div style="left:526px;top:31.5px;width:1px;height:21.5px;background:#a9c4de;"></div>
<div style="left:660.1px;top:32px;width:1px;height:21px;background:#a9a9a9;"></div>
<div style="left:808.0px;top:32px;width:1px;height:21px;background:#a9a9a9;"></div>
<div style="left:860.1px;top:32px;width:1px;height:21px;background:#a9a9a9;"></div>
<div style="left:960.1px;top:32px;width:1px;height:21px;background:#a9a9a9;"></div>
<div style="left:1036.0px;top:32px;width:1px;height:21px;background:#a9a9a9;"></div>
<div style="left:1063.9px;top:32px;width:1px;height:21px;background:#a9a9a9;"></div>
<div style="left:1156.0px;top:32px;width:1px;height:21px;background:#a9a9a9;"></div>
<div style="left:1098.9px;top:29px;width:1px;height:26px;background:#c4c4c4;"></div>
<div style="left:1102.5px;top:33px;width:1px;height:20px;background:repeating-linear-gradient(#bdbdbd 0 1px,transparent 1px 2.5px);"></div>
<div style="left:1278px;top:29px;width:1px;height:26.5px;background:#c4c4c4;"></div>
<div style="left:2.5px;top:60px;width:1px;height:20px;background:repeating-linear-gradient(#bdbdbd 0 1px,transparent 1px 2.5px);"></div>
<div style="left:174.9px;top:56px;width:1px;height:26px;background:#c4c4c4;"></div>
<div style="left:179.5px;top:60px;width:1px;height:20px;background:repeating-linear-gradient(#bdbdbd 0 1px,transparent 1px 2.5px);"></div>
<div style="left:206.9px;top:56px;width:1px;height:26px;background:#c4c4c4;"></div>
<div style="left:210.8px;top:60px;width:1px;height:20px;background:repeating-linear-gradient(#bdbdbd 0 1px,transparent 1px 2.5px);"></div>
<div style="left:263.8px;top:59px;width:1px;height:21px;background:#a9a9a9;"></div>
<div style="left:338.8px;top:58px;width:23.69999999999999px;height:22.5px;background:#c5dcf2;border:1px solid #b3cde6;"></div>
<div style="left:386.7px;top:56px;width:1px;height:26px;background:#c4c4c4;"></div>
<div style="left:390.5px;top:60px;width:1px;height:20px;background:repeating-linear-gradient(#bdbdbd 0 1px,transparent 1px 2.5px);"></div>
<div style="left:395.2px;top:58px;width:23.30000000000001px;height:22.5px;background:#c5dcf2;border:1px solid #b3cde6;"></div>
<div style="left:540.0px;top:59px;width:1px;height:21px;background:#a9a9a9;"></div>
<div style="left:567px;top:58px;width:23.299999999999955px;height:22.5px;background:#c5dcf2;border:1px solid #b3cde6;"></div>
<div style="left:638.0px;top:56px;width:1px;height:26px;background:#c4c4c4;"></div>
<div style="left:642.7px;top:60px;width:1px;height:20px;background:repeating-linear-gradient(#bdbdbd 0 1px,transparent 1px 2.5px);"></div>
<div style="left:792.1px;top:59px;width:1px;height:21px;background:#a9a9a9;"></div>
<div style="left:1060.1px;top:59px;width:1px;height:21px;background:#a9a9a9;"></div>
<div style="left:1160.5px;top:59px;width:1px;height:21px;background:#a9a9a9;"></div>
<div style="left:1210.8px;top:56px;width:1px;height:26px;background:#c4c4c4;"></div>
<svg style="left:164.8px;top:34.5px" width="16" height="16" viewBox="0 0 16 16"><path d="M1.5 3.5L6 1.5l3.5 2v7l-4.5 2.5-3.5-2z" fill="#e8c21a" stroke="#5a4a10" stroke-width="0.8"/><path d="M3.5 5h3M3.5 7h3" stroke="#6a5a10" stroke-width="0.8"/><path d="M8 7.5l5-2 2.5 4-5 3.5-3-1.5z" fill="#ead58a" stroke="#6a5a20" stroke-width="0.8"/><path d="M9.5 1.5l5 5" stroke="#555" stroke-width="0.8"/><path d="M3 12l-1.5 3" stroke="#444" stroke-width="1.2"/></svg>
<svg style="left:196.3px;top:34.5px" width="16" height="16" viewBox="0 0 16 16"><path d="M2 14L7.5 9" stroke="#111" stroke-width="3"/><path d="M2.8 13.2L7 9.5" stroke="#b8d030" stroke-width="1.3"/><ellipse cx="11" cy="5.5" rx="3.3" ry="4.3" transform="rotate(40 11 5.5)" fill="#1a1a1a"/><ellipse cx="11.3" cy="5.3" rx="1.8" ry="3" transform="rotate(40 11.3 5.3)" fill="#c8e030"/></svg>
<svg style="left:220.0px;top:34.5px" width="16" height="16" viewBox="0 0 16 16"><path d="M3 10.5l6-6" stroke="#222" stroke-width="1"/><path d="M9 4.5l5 5M3 10.5l4.5 4.5" stroke="#444" stroke-width="1"/><path d="M8 3.5l2 2M10 3.5l-2 2M2 9.5l2 2M4 9.5l-2 2" stroke="#111" stroke-width="1.3"/><text x="3.5" y="7" font-size="5.5" font-family="Liberation Sans" fill="#333">3</text></svg>
<svg style="left:244.0px;top:34.5px" width="16" height="16" viewBox="0 0 16 16"><path d="M1.5 14L14.5 2.5A9 9 0 0 0 1.5 14z" fill="#7a7a1a" stroke="#3a3a10" stroke-width="0.8"/><path d="M4.5 11.5L11.5 5A5.5 5.5 0 0 0 4.5 11.5z" fill="#f1f1f1"/></svg>
<svg style="left:269.0px;top:34.5px" width="16" height="16" viewBox="0 0 16 16"><rect x="6.5" y="1.5" width="8.5" height="8" fill="#fff" stroke="#333" stroke-width="1"/><text x="7.6" y="7.8" font-size="5" font-weight="bold" font-family="Liberation Sans" fill="#333">A1</text><path d="M6.5 6.5H3.5V13" stroke="#333" stroke-width="0.9" fill="none"/><path d="M1.8 12.5h3.4L3.5 15z" fill="#111"/></svg>
<svg style="left:291.3px;top:34.5px" width="16" height="16" viewBox="0 0 16 16"><path d="M8 8V1.5" stroke="#2a4aa0" stroke-width="1.8"/><path d="M8 8l5-3.5" stroke="#3a9a4a" stroke-width="1.6"/><path d="M8 8l5 3.5" stroke="#c82020" stroke-width="1.6"/><path d="M8 8L3 4.5M8 8L3.5 11.5M8 8v6" stroke="#ddd" stroke-width="1"/><circle cx="8" cy="8" r="1.3" fill="#111"/></svg>
<svg style="left:315.8px;top:34.5px" width="16" height="16" viewBox="0 0 16 16"><path d="M5 1.5h4l2.5 9.5 3 2-2 2L8.5 13 6 15 1.5 13.5z" fill="#4a4a42"/><path d="M6.2 9h3" stroke="#777" stroke-width="0.9"/></svg>
<svg style="left:478.0px;top:34.5px" width="16" height="16" viewBox="0 0 16 16"><circle cx="6.5" cy="6.5" r="4.5" fill="none" stroke="#111" stroke-width="1.6"/><path d="M6.5 2v2.5M6.5 8.5V11M2 6.5h2.5M8.5 6.5H11" stroke="#111" stroke-width="1"/><path d="M10 10l4.5 4.5" stroke="#111" stroke-width="2.2"/></svg>
<svg style="left:507.6px;top:34.5px" width="16" height="16" viewBox="0 0 16 16"><path d="M5 2.5v10l2.5-2.3 2 4 1.8-.9-2-3.8h3.3z" fill="#111"/></svg>
<svg style="left:527.3px;top:40.5px" width="6" height="4"><path d="M0 0.3H6L3 3.5Z" fill="#111"/></svg>
<svg style="left:542.5px;top:34.5px" width="16" height="16" viewBox="0 0 16 16"><path d="M2 9l6-6.5h6l-1.5 6-6 6H2.5z" fill="#f07aa8" stroke="#8a2050" stroke-width="0.8"/><path d="M2 9h5l1-6M7 9l-1 5.5" stroke="#b04070" stroke-width="0.7" fill="none"/></svg>
<svg style="left:567.0px;top:34.5px" width="16" height="16" viewBox="0 0 16 16"><path d="M2.5 13.5l1-3.5L12 1.5l2.5 2.5L6 12.5z" fill="#a01a2a" stroke="#3a0a10" stroke-width="0.7"/><path d="M2.5 13.5l1-3.5 2.5 2.5z" fill="#eacba0"/></svg>
<svg style="left:587.3px;top:40.5px" width="6" height="4"><path d="M0 0.3H6L3 3.5Z" fill="#111"/></svg>
<svg style="left:599.0px;top:34.5px" width="16" height="16" viewBox="0 0 16 16"><path d="M2.5 14.5V3A11.5 11.5 0 0 1 14 10z" fill="none" stroke="#c8204a" stroke-width="1"/><path d="M2.5 14.5L8 7" stroke="#c8204a" stroke-width="0.9"/><path d="M2.5 14.5V3" stroke="#333" stroke-width="1"/><circle cx="2.5" cy="14.5" r="1.2" fill="#d0103a"/><circle cx="14" cy="10" r="1" fill="#d0103a"/></svg>
<svg style="left:619.5px;top:40.5px" width="6" height="4"><path d="M0 0.3H6L3 3.5Z" fill="#111"/></svg>
<svg style="left:630.5px;top:34.5px" width="16" height="16" viewBox="0 0 16 16"><rect x="2.5" y="1.5" width="11" height="12.5" fill="#a89a8a" stroke="#555" stroke-width="0.9"/><path d="M2.5 14L13.5 1.5" stroke="#e0708a" stroke-width="0.9"/><circle cx="13.5" cy="1.5" r="0.9" fill="#d02040"/><circle cx="2.5" cy="14" r="0.9" fill="#d02040"/></svg>
<svg style="left:651.4px;top:40.5px" width="6" height="4"><path d="M0 0.3H6L3 3.5Z" fill="#111"/></svg>
<svg style="left:666.7px;top:34.5px" width="16" height="16" viewBox="0 0 16 16"><path d="M0.5 10.5l7.5-4 7.5 4-7.5 4.5z" fill="#9a9a88" stroke="#333" stroke-width="0.8"/><path d="M0.5 10.5v1.5l7.5 4 7.5-4v-1.5l-7.5 4.5z" fill="#4a4a42"/><path d="M8 11V4.5" stroke="#d01010" stroke-width="2.2"/><path d="M4.8 5.5L8 1l3.2 4.5z" fill="#d01010"/></svg>
<svg style="left:691.0px;top:34.5px" width="16" height="16" viewBox="0 0 16 16"><path d="M1 4a9 9 0 0 1 10-2" stroke="#d03040" stroke-width="0.9" fill="none"/><path d="M3 8a7 7 0 0 1 5-4M11 6a7 7 0 0 1 1 8" stroke="#d03040" stroke-width="1.1" fill="none"/><path d="M6 9.5L12 3.5l2 4-3 3z" fill="#d01010"/><path d="M12 2l3 1-1 3z" fill="#d01010"/></svg>
<svg style="left:714.5px;top:34.5px" width="16" height="16" viewBox="0 0 16 16"><path d="M8 0.5L15.5 8L8 15.5L0.5 8Z" fill="#c8102a"/><path d="M4.3 4.3L11.7 11.7M11.7 4.3L4.3 11.7" stroke="#fff" stroke-width="0.8"/><path d="M8 5.5L10.5 8L8 10.5L5.5 8Z" fill="#fff"/><path d="M8 6.8L9.2 8L8 9.2L6.8 8Z" fill="#c8102a"/></svg>
<svg style="left:738.5px;top:34.5px" width="16" height="16" viewBox="0 0 16 16"><path d="M2.5 7A5.5 5.5 0 0 1 12 4" stroke="#d01828" stroke-width="2.4" fill="none"/><path d="M10.5 1.5l4 1-2 3.5z" fill="#d01828"/><path d="M13.5 9A5.5 5.5 0 0 1 4 12" stroke="#d01828" stroke-width="2.4" fill="none"/><path d="M5.5 14.5l-4-1 2-3.5z" fill="#d01828"/></svg>
<svg style="left:763.5px;top:34.5px" width="16" height="16" viewBox="0 0 16 16"><rect x="1" y="1.5" width="14" height="14" fill="#fff" stroke="#e8a0b0" stroke-width="0.8"/><rect x="1.5" y="5" width="10" height="10.5" fill="#8a8a78" stroke="#444" stroke-width="0.6"/><path d="M7 9l6-6" stroke="#d01010" stroke-width="2"/><path d="M9.5 1.5h5v5z" fill="#d01010"/></svg>
<svg style="left:786.4px;top:34.5px" width="16" height="16" viewBox="0 0 16 16"><path d="M1.5 8l4-3h4v7l-4 3h-4z" fill="#fff" stroke="#555" stroke-width="0.8"/><rect x="7" y="1.5" width="4" height="10" fill="#3a8ad0"/><path d="M9 3h5.5v9L11 15H9z" fill="#7a7a70" stroke="#444" stroke-width="0.7"/><path d="M9 9l5.5-3" stroke="#fff" stroke-width="1.2"/></svg>
<svg style="left:815.0px;top:34.5px" width="16" height="16" viewBox="0 0 16 16"><path d="M2 14L7.5 9" stroke="#111" stroke-width="3"/><path d="M2.8 13.2L7 9.5" stroke="#b8d030" stroke-width="1.3"/><ellipse cx="11" cy="5.5" rx="3.3" ry="4.3" transform="rotate(40 11 5.5)" fill="#1a1a1a"/><ellipse cx="11.3" cy="5.3" rx="1.8" ry="3" transform="rotate(40 11.3 5.3)" fill="#c8e030"/></svg>
<svg style="left:837.0px;top:34.5px" width="16" height="16" viewBox="0 0 16 16"><path d="M1.5 12c0-4 2-8 5-10l2 3c-2 2-3 5-3 8z" fill="#f0b010" stroke="#7a5a00" stroke-width="0.7"/><path d="M6 5l5-3 4 4-1.5 6.5-5 2.5-2.5-6z" fill="#d8d0b8" stroke="#333" stroke-width="1"/><path d="M7 7l6-3" stroke="#333" stroke-width="0.9"/><circle cx="12" cy="2.5" r="1.5" fill="none" stroke="#333" stroke-width="0.8"/></svg>
<svg style="left:866.4px;top:34.5px" width="16" height="16" viewBox="0 0 16 16"><path d="M7 3A5 5 0 0 0 4.5 13" stroke="#c82838" stroke-width="2.6" fill="none"/><path d="M9 13A5 5 0 0 0 11.5 3" stroke="#3a9a70" stroke-width="2.6" fill="none"/><path d="M8 0.5v15" stroke="#111" stroke-width="1.5"/></svg>
<svg style="left:890.4px;top:34.5px" width="16" height="16" viewBox="0 0 16 16"><path d="M3 9V6.5a1 1 0 0 1 2 0V9V3a1 1 0 0 1 2 0v5V2.5a1 1 0 0 1 2 0V8V3.5a1 1 0 0 1 2 0V9l1-2a1 1 0 0 1 2 .5l-2 5a4 4 0 0 1-3.5 2.5H7A4 4 0 0 1 3 11z" fill="#f2e2b8" stroke="#8a7a5a" stroke-width="0.7"/></svg>
<svg style="left:914.5px;top:34.5px" width="16" height="16" viewBox="0 0 16 16"><circle cx="9.5" cy="6.5" r="4.8" fill="#a8c8ec" stroke="#1a1a1a" stroke-width="1.4"/><path d="M6 10L1.5 14.5" stroke="#111" stroke-width="2.2"/></svg>
<svg style="left:939.0px;top:34.5px" width="16" height="16" viewBox="0 0 16 16"><circle cx="8.5" cy="7.5" r="3.5" fill="#a8c8ec" stroke="#1a1a1a" stroke-width="1.2"/><path d="M6 10L2 14" stroke="#111" stroke-width="1.8"/><path d="M1 1h4l-1 1 2 2-1.5 1.5-2-2-1.5 1z M15 1h-4l1 1-2 2 1.5 1.5 2-2 1.5 1z M15 15h-4l1-1-2-2 1.5-1.5 2 2 1.5-1z" fill="#c81828"/></svg>
<svg style="left:967.6px;top:34.5px" width="16" height="16" viewBox="0 0 16 16"><path d="M8 1l6 3.5v7L8 15l-6-3.5v-7z" fill="#1e6ea8"/><path d="M8 3.5l4 2.3v4.4L8 12.5 4 10.2V5.8z" fill="#fff"/><circle cx="8" cy="8" r="2" fill="#1e6ea8"/><path d="M11.5 9v5M9.5 12l2 2.5 2-2.5" stroke="#fff" stroke-width="2.4" fill="none"/><path d="M11.5 9v5M9.5 12l2 2.5 2-2.5" stroke="#1e6ea8" stroke-width="1.2" fill="none"/></svg>
<svg style="left:990.5px;top:34.5px" width="16" height="16" viewBox="0 0 16 16"><path d="M1.5 2c3 3 10 3 13 0M1.5 5c3 3 10 3 13 0" stroke="#1e6ea8" stroke-width="1.8" fill="none"/><path d="M1.5 14c3-3 10-3 13 0M1.5 11c3-3 10-3 13 0" stroke="#1e6ea8" stroke-width="1.8" fill="none"/></svg>
<svg style="left:1016.5px;top:34.5px" width="16" height="16" viewBox="0 0 16 16"><path d="M1 4.5L7 1.5l6 3-6 3z" fill="#2878b0"/><path d="M1 7l6 3 6-3M1 9.5l6 3 6-3" stroke="#2878b0" stroke-width="1.6" fill="none"/><path d="M9 10h3.5V8l3.5 3.5-3.5 3.5v-2H9z" fill="#fff" stroke="#2878b0" stroke-width="0.9"/></svg>
<svg style="left:1043.5px;top:34.5px" width="16" height="16" viewBox="0 0 16 16"><path d="M1.5 2c3 3 10 3 13 0M1.5 5c3 3 10 3 13 0" stroke="#1e6ea8" stroke-width="1.8" fill="none"/><path d="M1.5 12c2-2 5-2.5 7-2.5" stroke="#1e6ea8" stroke-width="1.8" fill="none"/><circle cx="12" cy="12" r="3.3" fill="#fff" stroke="#2878b0" stroke-width="1.2"/><circle cx="12" cy="12" r="1.2" fill="#2878b0"/></svg>
<svg style="left:1069.7px;top:33.5px" width="18" height="18" viewBox="0 0 16 16"><circle cx="8" cy="8" r="7.2" fill="none" stroke="#555" stroke-width="0.9"/><circle cx="8" cy="6" r="2.6" fill="none" stroke="#555" stroke-width="0.9"/><path d="M3.5 13a5 5 0 0 1 9 0" fill="none" stroke="#555" stroke-width="0.9"/></svg>
<svg style="left:1091.4px;top:40.5px" width="6" height="4"><path d="M0 0.3H6L3 3.5Z" fill="#111"/></svg>
<svg style="left:1110.6px;top:34.5px" width="16" height="16" viewBox="0 0 16 16"><path d="M2 5l6-3 5 2 2 7-7 3-5-2z" fill="#c49080" stroke="#5a3a30" stroke-width="0.8"/><path d="M3 7l9-3M3.5 9.5l9-3M4 12l9-3" stroke="#e8c8b8" stroke-width="0.7"/></svg>
<svg style="left:1134.5px;top:34.5px" width="16" height="16" viewBox="0 0 16 16"><path d="M1.5 4l11-2 2.5 9-10 3.5z" fill="#a09a88" stroke="#333" stroke-width="0.8"/><path d="M5 3.5l2.5 9.5M9 2.8l2.5 9.5M2.5 8l11-2.5" stroke="#444" stroke-width="0.7"/><circle cx="1.5" cy="4" r="1.4" fill="#e01030"/><circle cx="12.5" cy="2" r="1.4" fill="#e01030"/><circle cx="15" cy="11" r="1.2" fill="#e01030"/><circle cx="5" cy="14.5" r="1.4" fill="#e01030"/></svg>
<svg style="left:1162.7px;top:34.5px" width="16" height="16" viewBox="0 0 16 16"><path d="M1 9l7-6 7 6-7 6z" fill="#6a6a5e" stroke="#333" stroke-width="0.8"/><path d="M4 9l4-3.5 4 3.5-4 3.5z" fill="#9a9a88"/><path d="M8 2v11" stroke="#d01018" stroke-width="2"/><path d="M5.5 4.5L8 1l2.5 3.5zM5.5 10.5L8 14l2.5-3.5z" fill="#d01018"/></svg>
<svg style="left:1186.7px;top:34.5px" width="16" height="16" viewBox="0 0 16 16"><path d="M1 11l5-8 9 6-6 5z" fill="#3a3a36" stroke="#111" stroke-width="0.8"/><path d="M5 10l2.5-4 4 3-3 2.5z" fill="#c8c8c0"/><path d="M7.5 9V4M6 5.5l1.5-2 1.5 2" stroke="#111" stroke-width="0.9" fill="none"/></svg>
<svg style="left:1210.0px;top:34.5px" width="16" height="16" viewBox="0 0 16 16"><path d="M2 9l4-3h5l3 3v5H2z" fill="#c8c8c0" stroke="#444" stroke-width="0.9"/><path d="M5 6V3a3 3 0 0 1 6 0v3" fill="none" stroke="#444" stroke-width="0.9"/><ellipse cx="8" cy="10" rx="3" ry="2.5" fill="none" stroke="#666" stroke-width="0.8"/></svg>
<svg style="left:1234.4px;top:34.5px" width="16" height="16" viewBox="0 0 16 16"><path d="M1 4l10-2.5 4.5 9L4 14z" fill="#2a2a28" stroke="#111" stroke-width="0.7"/><path d="M4 5l6-1.5 3 5.5-6.5 2z" fill="#6a6258"/><circle cx="8" cy="7.5" r="1.6" fill="#c8b8a8"/></svg>
<svg style="left:1259.0px;top:34.5px" width="16" height="16" viewBox="0 0 16 16"><path d="M1 12L10 1.5l5.5 2.5L11 15z" fill="#9a8a80" stroke="#333" stroke-width="0.7"/><path d="M10 1.5L11 15M1 12l14.5-8" stroke="#333" stroke-width="0.8"/><path d="M10 1.5l5.5 2.5-4.5 4z" fill="#5a4a44"/><circle cx="1.2" cy="12" r="1.1" fill="#e01030"/><circle cx="15.5" cy="4" r="1.1" fill="#e01030"/></svg>
<svg style="left:10.600000000000001px;top:61.0px" width="16" height="16" viewBox="0 0 16 16"><path d="M1.5 8.5L6 3.5l4 1 4.5 4.5-4.5 2z" fill="#8a8a80" stroke="#222" stroke-width="0.9"/><path d="M2.5 8.5v5l3.5 2v-5.5z" fill="#fff" stroke="#222" stroke-width="0.9"/><path d="M6 10.5v5l8-3.5V9z" fill="#f2f2f2" stroke="#222" stroke-width="0.9"/><rect x="10" y="1.5" width="2" height="3.5" fill="#fff" stroke="#222" stroke-width="0.7"/><rect x="3.5" y="11" width="1.5" height="3" fill="#333"/></svg>
<svg style="left:35.0px;top:61.0px" width="16" height="16" viewBox="0 0 16 16"><path d="M2 2.5l5-1.5 7 1.5v11.5l-7 1.5-5-1.5z" fill="#a8a898" stroke="#333" stroke-width="0.9"/><path d="M7 1v14.5" stroke="#555" stroke-width="0.8"/><rect x="10" y="4" width="2.5" height="4" fill="#fff" stroke="#333" stroke-width="0.7"/></svg>
<svg style="left:58.8px;top:61.0px" width="16" height="16" viewBox="0 0 16 16"><path d="M1 8.5L8 2l7 6.5" stroke="#111" stroke-width="1.6" fill="none"/><path d="M3 7.5v7h10v-7" stroke="#111" stroke-width="1.5" fill="none"/><rect x="6.5" y="9.5" width="3" height="5" fill="#111"/></svg>
<svg style="left:82.7px;top:61.0px" width="16" height="16" viewBox="0 0 16 16"><path d="M1 7.5L3 5h10l2 2.5z" fill="#8a8a80" stroke="#333" stroke-width="0.9"/><rect x="2.5" y="7.5" width="11" height="7" fill="#fff" stroke="#333" stroke-width="1.1"/><rect x="8.5" y="1" width="3.5" height="4.5" fill="#fff" stroke="#333" stroke-width="0.8"/></svg>
<svg style="left:106.6px;top:61.0px" width="16" height="16" viewBox="0 0 16 16"><path d="M1 7.5L3 4.5h10l2 3z" fill="#8a8a80" stroke="#333" stroke-width="0.9"/><rect x="2.5" y="7.5" width="11" height="7" fill="#fff" stroke="#333" stroke-width="1.1"/></svg>
<svg style="left:130.5px;top:61.0px" width="16" height="16" viewBox="0 0 16 16"><path d="M1 8.5L8 2l7 6.5" stroke="#111" stroke-width="1.5" fill="none"/><path d="M3 7.5v7h10v-7" stroke="#111" stroke-width="1.4" fill="none"/><circle cx="3.5" cy="3" r="0.9" fill="#777"/></svg>
<svg style="left:154.4px;top:61.0px" width="16" height="16" viewBox="0 0 16 16"><path d="M4 2h10v12.5H2.5v-7c1.5-.5 1.5-2 0-2.5V3z" fill="#fff" stroke="#111" stroke-width="1.7" stroke-linejoin="round"/></svg>
<svg style="left:184.6px;top:59.0px" width="20" height="20" viewBox="0 0 16 16"><path d="M3 7c-.5-3 2-6 5.5-6s6 2.5 5 6c-.8 3-4 4.5-6 4.5L7 15.5h-2l.5-4.5C4 10.5 3.2 9 3 7z" fill="#c81010"/><path d="M5.5 7c0-2.5 1.5-4.5 4-4.5 2 0 2.5 1.5 2 3.5-.5 2.5-3 4-4.5 4-1 0-1.5-1-1.5-3z" fill="#f5e020"/><circle cx="4" cy="2.5" r="1.6" fill="#f8e8a0" stroke="#e0a080" stroke-width="0.5"/></svg>
<svg style="left:218.5px;top:61.0px" width="16" height="16" viewBox="0 0 16 16"><path d="M1 4.5L9.5 0.8L15.3 7.2L14 11L6.5 15.5L4 12.5Z" fill="#7ea0b8" stroke="#222" stroke-width="1.1"/><path d="M1 4.5L6 8.5L15.3 7.2M6 8.5L6.5 15.5" fill="none" stroke="#5a8098" stroke-width="0.6"/></svg>
<svg style="left:242.8px;top:61.0px" width="16" height="16" viewBox="0 0 16 16"><path d="M1 4.5L9.5 0.8L15.3 7.2L14 11L6.5 15.5L4 12.5Z" fill="#fff" stroke="#555" stroke-width="1"/><path d="M9.5 0.8L9 9.5L4 12.5M9 9.5L14 11" stroke="#aaa" stroke-width="0.6" fill="none"/></svg>
<svg style="left:270.0px;top:61.0px" width="16" height="16" viewBox="0 0 16 16"><path d="M1 4.5L9.5 0.8L15.3 7.2L14 11L6.5 15.5L4 12.5Z" fill="none" stroke="#333" stroke-width="1"/><path d="M1 4.5L6 8.5L15.3 7.2M6 8.5L6.5 15.5M4.2 10.5L14.5 9" stroke="#333" stroke-width="0.9" fill="none"/></svg>
<svg style="left:294.4px;top:61.0px" width="16" height="16" viewBox="0 0 16 16"><path d="M1 4.5L9.5 0.8L15.3 7.2L14 11L6.5 15.5L4 12.5Z" fill="#fff" stroke="#222" stroke-width="1.2"/><path d="M5.5 12.5L13.5 11" stroke="#888" stroke-width="0.6" fill="none"/></svg>
<svg style="left:318.3px;top:61.0px" width="16" height="16" viewBox="0 0 16 16"><path d="M1 4.5L9.5 0.8L15.3 7.2L14 11L6.5 15.5L4 12.5Z" fill="#9a9a8a" stroke="#333" stroke-width="1"/></svg>
<svg style="left:342.5px;top:61.0px" width="16" height="16" viewBox="0 0 16 16"><path d="M1 4.5L9.5 0.8L15.3 7.2L14 11L6.5 15.5L4 12.5Z" fill="#111" stroke="#111" stroke-width="1"/><path d="M2 7.5L15 5.5M3.2 11L14.5 9" stroke="#e8e8e8" stroke-width="1.6" fill="none"/></svg>
<svg style="left:366.2px;top:61.0px" width="16" height="16" viewBox="0 0 16 16"><path d="M1 4.5L9.5 0.8L15.3 7.2L14 11L6.5 15.5L4 12.5Z" fill="#8a8a80" stroke="#333" stroke-width="1"/><path d="M1 4.5L9.5 0.8L15.3 7.2L6 9.5Z" fill="#2a8ad8"/></svg>
<svg style="left:399.4px;top:61.0px" width="16" height="16" viewBox="0 0 16 16"><path d="M2 4l6-2.5 6 2.5v9l-6 2.5-6-2.5z" fill="#e8b868" stroke="#6a4a30" stroke-width="0.8"/><path d="M2 4l6 2.5 6-2.5-6-2.5z" fill="#8a3a48"/><path d="M8 6.5v9" stroke="#6a4a30" stroke-width="0.8"/><rect x="9.5" y="8.5" width="2.5" height="3" fill="#8a6a50"/></svg>
<svg style="left:422.7px;top:61.0px" width="16" height="16" viewBox="0 0 16 16"><path d="M2 4.5l5-3 7 2v9.5l-5 2.5-7-2z" fill="#2a70c0" stroke="#1a4a80" stroke-width="0.8"/><path d="M2 4.5l7 2 5-3M9 6.5V15.5" stroke="#7ab0e8" stroke-width="0.7" fill="none"/><rect x="10" y="9" width="2" height="2.5" fill="#fff"/><rect x="3.5" y="9" width="2.5" height="5" fill="#fff"/></svg>
<svg style="left:446.1px;top:61.0px" width="16" height="16" viewBox="0 0 16 16"><path d="M2 4l6-2.5 6 2.5v9l-6 2.5-6-2.5z" fill="#b87a38" stroke="#5a3a10" stroke-width="0.7"/><path d="M2 7l6 2.5 6-2.5M2 10l6 2.5 6-2.5M5 2.8v10.7M11 2.8v10.7M8 4v11.5" stroke="#5a3a10" stroke-width="0.8" fill="none"/></svg>
<svg style="left:470.5px;top:61.0px" width="16" height="16" viewBox="0 0 16 16"><path d="M2 4l6-2.5 6 2.5v9l-6 2.5-6-2.5z" fill="#f8c890" stroke="#e8a058" stroke-width="0.7"/><path d="M2 7l6 2.5 6-2.5M2 10l6 2.5 6-2.5M5 2.8v10.7M11 2.8v10.7M8 4v11.5" stroke="#e8a058" stroke-width="0.8" fill="none"/></svg>
<svg style="left:494.9px;top:61.0px" width="16" height="16" viewBox="0 0 16 16"><path d="M2 4l6-2.5 6 2.5v9l-6 2.5-6-2.5z" fill="#f8c890" stroke="#e8a058" stroke-width="0.7"/><path d="M2 7l6 2.5 6-2.5M2 10l6 2.5 6-2.5M5 2.8v10.7M11 2.8v10.7M8 4v11.5" stroke="#e8a058" stroke-width="0.8" fill="none"/></svg>
<svg style="left:518.3px;top:61.0px" width="16" height="16" viewBox="0 0 16 16"><path d="M1.5 3.5l6.5-2 6.5 2v9.5l-6.5 2.5L1.5 13z" fill="#f6c078" stroke="#d89040" stroke-width="0.7"/><path d="M1.5 6.5l6.5 2 6.5-2M1.5 9.5l6.5 2 6.5-2" stroke="#fbe0b0" stroke-width="1.2" fill="none"/><path d="M1.5 12l6.5 2.5 6.5-2.5" stroke="#d08030" stroke-width="1.4" fill="none"/></svg>
<svg style="left:545.7px;top:60.0px" width="18" height="18" viewBox="0 0 16 16"><path d="M1.5 5.5l4-4h9v9l-4 4h-9z" fill="none" stroke="#2a3a50" stroke-width="1"/><path d="M1.5 5.5h9v9M10.5 5.5l4-4M1.5 14.5l4-4h9M5.5 1.5v9" stroke="#2a3a50" stroke-width="0.9" fill="none"/></svg>
<svg style="left:572.0px;top:61.0px" width="16" height="16" viewBox="0 0 16 16"><path d="M2 5l4-3h6l2 2v8l-4 3H4l-2-2z" fill="#3aa0a8" stroke="#1a5a80" stroke-width="0.8"/><path d="M2 8h8M2 11h8M5 5v10M8 5v10M10 5l4-3M10 8l4-3M10 11l4-3" stroke="#b8e8f0" stroke-width="0.7" fill="none"/><path d="M2 5h8v10" stroke="#1a4a80" stroke-width="0.8" fill="none"/></svg>
<svg style="left:594.5px;top:61.0px" width="16" height="16" viewBox="0 0 16 16"><path d="M2 5.5l5-3 7 1.5v7l-5 3.5-7-2z" fill="#1a8aa8" stroke="#0a3a60" stroke-width="0.8"/><path d="M2 5.5l7 2v7M9 7.5l5-3.5" stroke="#0a3a60" stroke-width="0.8" fill="none"/><path d="M2 5.5l5-3 7 1.5-5 3.5z" fill="#3ac0b8"/></svg>
<svg style="left:617.8px;top:61.0px" width="16" height="16" viewBox="0 0 16 16"><rect x="2" y="2.5" width="12.5" height="12.5" fill="#fff" stroke="#999" stroke-width="0.8"/><rect x="2" y="2" width="12.5" height="2.5" fill="#f0a040"/><path d="M2 7.5h12.5M2 10.5h12.5M5 4.5v10.5M8 4.5v10.5M11 4.5v10.5" stroke="#bbb" stroke-width="0.6"/><rect x="8.5" y="8" width="2" height="2" fill="#e06040"/></svg>
<svg style="left:650.5px;top:61.0px" width="16" height="16" viewBox="0 0 16 16"><path d="M2 3h6l3 3v9H2z" fill="#fff" stroke="#bbb" stroke-width="0.8"/><path d="M3 6h5M3 8h6" stroke="#ddd" stroke-width="0.6"/><path d="M12.5 1v6M9.5 4h6" stroke="#1a5aa8" stroke-width="1.6"/></svg>
<svg style="left:673.8px;top:61.0px" width="16" height="16" viewBox="0 0 16 16"><path d="M1 6h5l1.5 1.5H15V15H1z" fill="#1a68b8"/><path d="M3 9h12.5L14 15H1z" fill="#2a80d0"/><path d="M8 7V2M5.8 4.2L8 1.5l2.2 2.7" stroke="#1a68b8" stroke-width="1.6" fill="none"/></svg>
<svg style="left:698.2px;top:61.0px" width="16" height="16" viewBox="0 0 16 16"><rect x="2" y="1.5" width="12" height="13" fill="#2878c8"/><rect x="4" y="1.5" width="7" height="4.5" fill="#1a5aa0"/><rect x="3.5" y="8" width="9" height="6.5" fill="#fff"/></svg>
<svg style="left:722.6px;top:61.0px" width="16" height="16" viewBox="0 0 16 16"><rect x="2" y="1.5" width="12" height="13" fill="#2878c8"/><rect x="4" y="1.5" width="7" height="4.5" fill="#1a5aa0"/><rect x="3.5" y="8" width="9" height="6.5" fill="#fff"/><path d="M3 1l4 13" stroke="#e8a040" stroke-width="1.8"/></svg>
<svg style="left:746.0px;top:60.0px" width="18" height="18" viewBox="0 0 16 16"><path d="M6 3l9-1.5 0.5 11L7 15z" fill="#1a60b0"/><text x="7.8" y="10" font-size="4" font-weight="bold" font-family="Liberation Sans" fill="#fff">IDF</text><path d="M0.5 6.5h3V4.5L7 8l-3.5 3.5v-2h-3z" fill="#1a60b0"/></svg>
<svg style="left:770.4px;top:60.0px" width="18" height="18" viewBox="0 0 16 16"><path d="M1 3l9-1.5 0.5 11L2 15z" fill="#1a60b0"/><text x="2.8" y="10" font-size="4" font-weight="bold" font-family="Liberation Sans" fill="#fff">IDF</text><path d="M9 6.5h3.5V4.5L16 8l-3.5 3.5v-2H9z" fill="#1a60b0"/></svg>
<svg style="left:797.8px;top:61.0px" width="16" height="16" viewBox="0 0 16 16"><path d="M1.5 6l3-3h7v8l-3 3.5h-7z" fill="#e8e8e8" stroke="#999" stroke-width="0.8"/><path d="M3 7.5h6v6H3z" fill="#8a8070"/><path d="M13 0.5v5M10.5 3h5" stroke="#1a4a80" stroke-width="1.5"/></svg>
<svg style="left:823.2px;top:61.0px" width="16" height="16" viewBox="0 0 16 16"><path d="M2.5 8l10 0-1.5 6H3.5z" fill="#dde8f4" stroke="#3a6ab0" stroke-width="0.8"/><path d="M4 10h8M5 8v6M8 8v6M11 8v6" stroke="#3a6ab0" stroke-width="0.5"/><circle cx="4" cy="4" r="1.8" fill="#f0a040"/><path d="M4 0.8v1M0.8 4h1M1.8 1.8l.7.7" stroke="#f0a040" stroke-width="0.8"/><path d="M12.5 1v5.5M9.8 3.7h5.5" stroke="#1a4a80" stroke-width="1.5"/></svg>
<svg style="left:847.6px;top:61.0px" width="16" height="16" viewBox="0 0 16 16"><path d="M1 8l6-3 4 1 2-1v9l-6 1.5-6-1.5z" fill="#2a70c0"/><path d="M12.5 0.5v5.5M9.8 3.2h5.5" stroke="#1a4a80" stroke-width="1.5"/></svg>
<svg style="left:872.2px;top:61.0px" width="16" height="16" viewBox="0 0 16 16"><circle cx="6.5" cy="9.5" r="5.3" fill="#dde6f0" stroke="#2a70c0" stroke-width="1.2"/><path d="M6.5 4.2v10.6M1.2 9.5h10.6" stroke="#2a70c0" stroke-width="1"/><path d="M6.5 9.5V4.2A5.3 5.3 0 0 0 1.2 9.5z" fill="#f0a040"/><path d="M12.5 0.8v5.5M9.8 3.5h5.5" stroke="#1a4a80" stroke-width="1.5"/></svg>
<svg style="left:894.5px;top:61.0px" width="16" height="16" viewBox="0 0 16 16"><path d="M2 6l4.5-2.5L11 6v6l-4.5 3L2 12z" fill="#2a70c0"/><path d="M2 6l4.5 2.5L11 6" stroke="#1a4a80" stroke-width="0.7" fill="none"/><circle cx="3.5" cy="3" r="1.7" fill="#f0a040"/><path d="M12.5 1v5M10 3.5h5" stroke="#1a4a80" stroke-width="1.5"/></svg>
<svg style="left:918.9px;top:61.0px" width="16" height="16" viewBox="0 0 16 16"><circle cx="6" cy="8" r="3.6" fill="#fbf2d0" stroke="#e0c880" stroke-width="0.7"/><rect x="4.8" y="11.5" width="2.4" height="2.5" fill="#ddd"/><path d="M6 2.5v1.2M1.5 8h1.2M2.8 4.8l.8.8" stroke="#e8c060" stroke-width="0.7"/><path d="M12.5 1.5v5M10 4h5" stroke="#1a4a80" stroke-width="1.5"/></svg>
<svg style="left:943.3px;top:61.0px" width="16" height="16" viewBox="0 0 16 16"><circle cx="7" cy="9.5" r="5.8" fill="#f0a040"/><ellipse cx="4.5" cy="9.5" rx="2.3" ry="1.7" fill="#111"/><ellipse cx="9.5" cy="9.5" rx="2.3" ry="1.7" fill="#111"/><path d="M12.5 0.5v5.5M9.8 3.2h5.5" stroke="#1a4a80" stroke-width="1.5"/></svg>
<svg style="left:966.7px;top:61.0px" width="16" height="16" viewBox="0 0 16 16"><rect x="6.5" y="1" width="3" height="14.5" fill="#2a70c0"/><rect x="1" y="4.5" width="14" height="2.2" rx="1" fill="#2a70c0"/><rect x="1" y="9.5" width="14" height="2.2" rx="1" fill="#2a70c0"/></svg>
<svg style="left:989.0px;top:60.0px" width="18" height="18" viewBox="0 0 16 16"><path d="M8 0.5l7 4v8l-7 4-7-4v-8z" fill="#1a68b0"/><path d="M4 4.5l8 8M12 4.5l-8 8" stroke="#fff" stroke-width="1.8"/><circle cx="11.5" cy="5" r="1.8" fill="#1a68b0" stroke="#fff" stroke-width="1.2"/></svg>
<svg style="left:1013.4px;top:60.0px" width="18" height="18" viewBox="0 0 16 16"><path d="M1 8l5-3.5 9.5 3.5-5 3.5z" fill="#fff" stroke="#4a6a8a" stroke-width="1.1"/><path d="M5 6.8l6 2.2M7 5.5l1 .4M9 6.3l1 .4" stroke="#4a6a8a" stroke-width="0.8"/></svg>
<svg style="left:1038.8px;top:61.0px" width="16" height="16" viewBox="0 0 16 16"><rect x="2" y="1.5" width="5.3" height="6" fill="#fff" stroke="#8aa0b4" stroke-width="0.9"/><rect x="8.7" y="1.5" width="5.3" height="6" fill="#fff" stroke="#8aa0b4" stroke-width="0.9"/><rect x="2" y="8.7" width="5.3" height="6" fill="#fff" stroke="#8aa0b4" stroke-width="0.9"/><rect x="8.7" y="8.7" width="5.3" height="6" fill="#fff" stroke="#8aa0b4" stroke-width="0.9"/></svg>
<svg style="left:1066.3px;top:61.0px" width="16" height="16" viewBox="0 0 16 16"><circle cx="6.5" cy="6.5" r="4.8" fill="#f4f0e8" stroke="#d8a040" stroke-width="1.4"/><circle cx="6.5" cy="6.5" r="2.8" fill="#2a5aa8"/><path d="M4 6.5a2.5 2.5 0 0 1 5 0z" fill="#f0b040"/><path d="M10 10l4.5 5" stroke="#e8a040" stroke-width="2"/></svg>
<svg style="left:1089.6px;top:61.0px" width="16" height="16" viewBox="0 0 16 16"><path d="M1.5 3h13L9.5 9v5.5l-3-1.5V9z" fill="#f0a838"/><ellipse cx="8" cy="3" rx="6.5" ry="1.5" fill="#d88820"/></svg>
<svg style="left:1114.0px;top:61.0px" width="16" height="16" viewBox="0 0 16 16"><path d="M8 4l5-2.5 2.5 4-1.5 6-5 2z" fill="#f0a850"/><path d="M2 2v12l3-3 2.5 4.5 2-1L7 10h4z" fill="#111"/></svg>
<svg style="left:1138.0px;top:61.0px" width="16" height="16" viewBox="0 0 16 16"><path d="M8 1l7.5 13.5H0.5z" fill="#f0a030"/><rect x="7.2" y="5" width="1.6" height="5.5" fill="#fff"/><rect x="7.2" y="11.5" width="1.6" height="1.6" fill="#fff"/></svg>
<svg style="left:1167.0px;top:61.0px" width="16" height="16" viewBox="0 0 16 16"><path d="M8 1l6.5 3.5v7L8 15l-6.5-3.5v-7z" fill="#8a6a58"/><path d="M1.5 4.5L8 1l6.5 3.5L8 8z" fill="#1a68b8"/><path d="M8 8l6.5-3.5v7L8 15z" fill="#f09020"/><circle cx="8" cy="8" r="1.5" fill="#fff"/></svg>
<svg style="left:1189.75px;top:60.0px" width="18" height="18" viewBox="0 0 16 16"><path d="M8 0.5l7 4v8l-7 4-7-4v-8z" fill="#8a6a58"/><path d="M1 4.5L8 0.5l7 4L8 8.5z" fill="#1a68b8"/><path d="M8 8.5l7-4v8l-7 4z" fill="#f09020"/><path d="M5.5 5a2.5 2.5 0 1 1 3.5 2.3c-.8.4-1 1-1 2" stroke="#fff" stroke-width="1.6" fill="none"/><rect x="7" y="11" width="2" height="2.5" fill="#fff"/></svg>
</body></html>
